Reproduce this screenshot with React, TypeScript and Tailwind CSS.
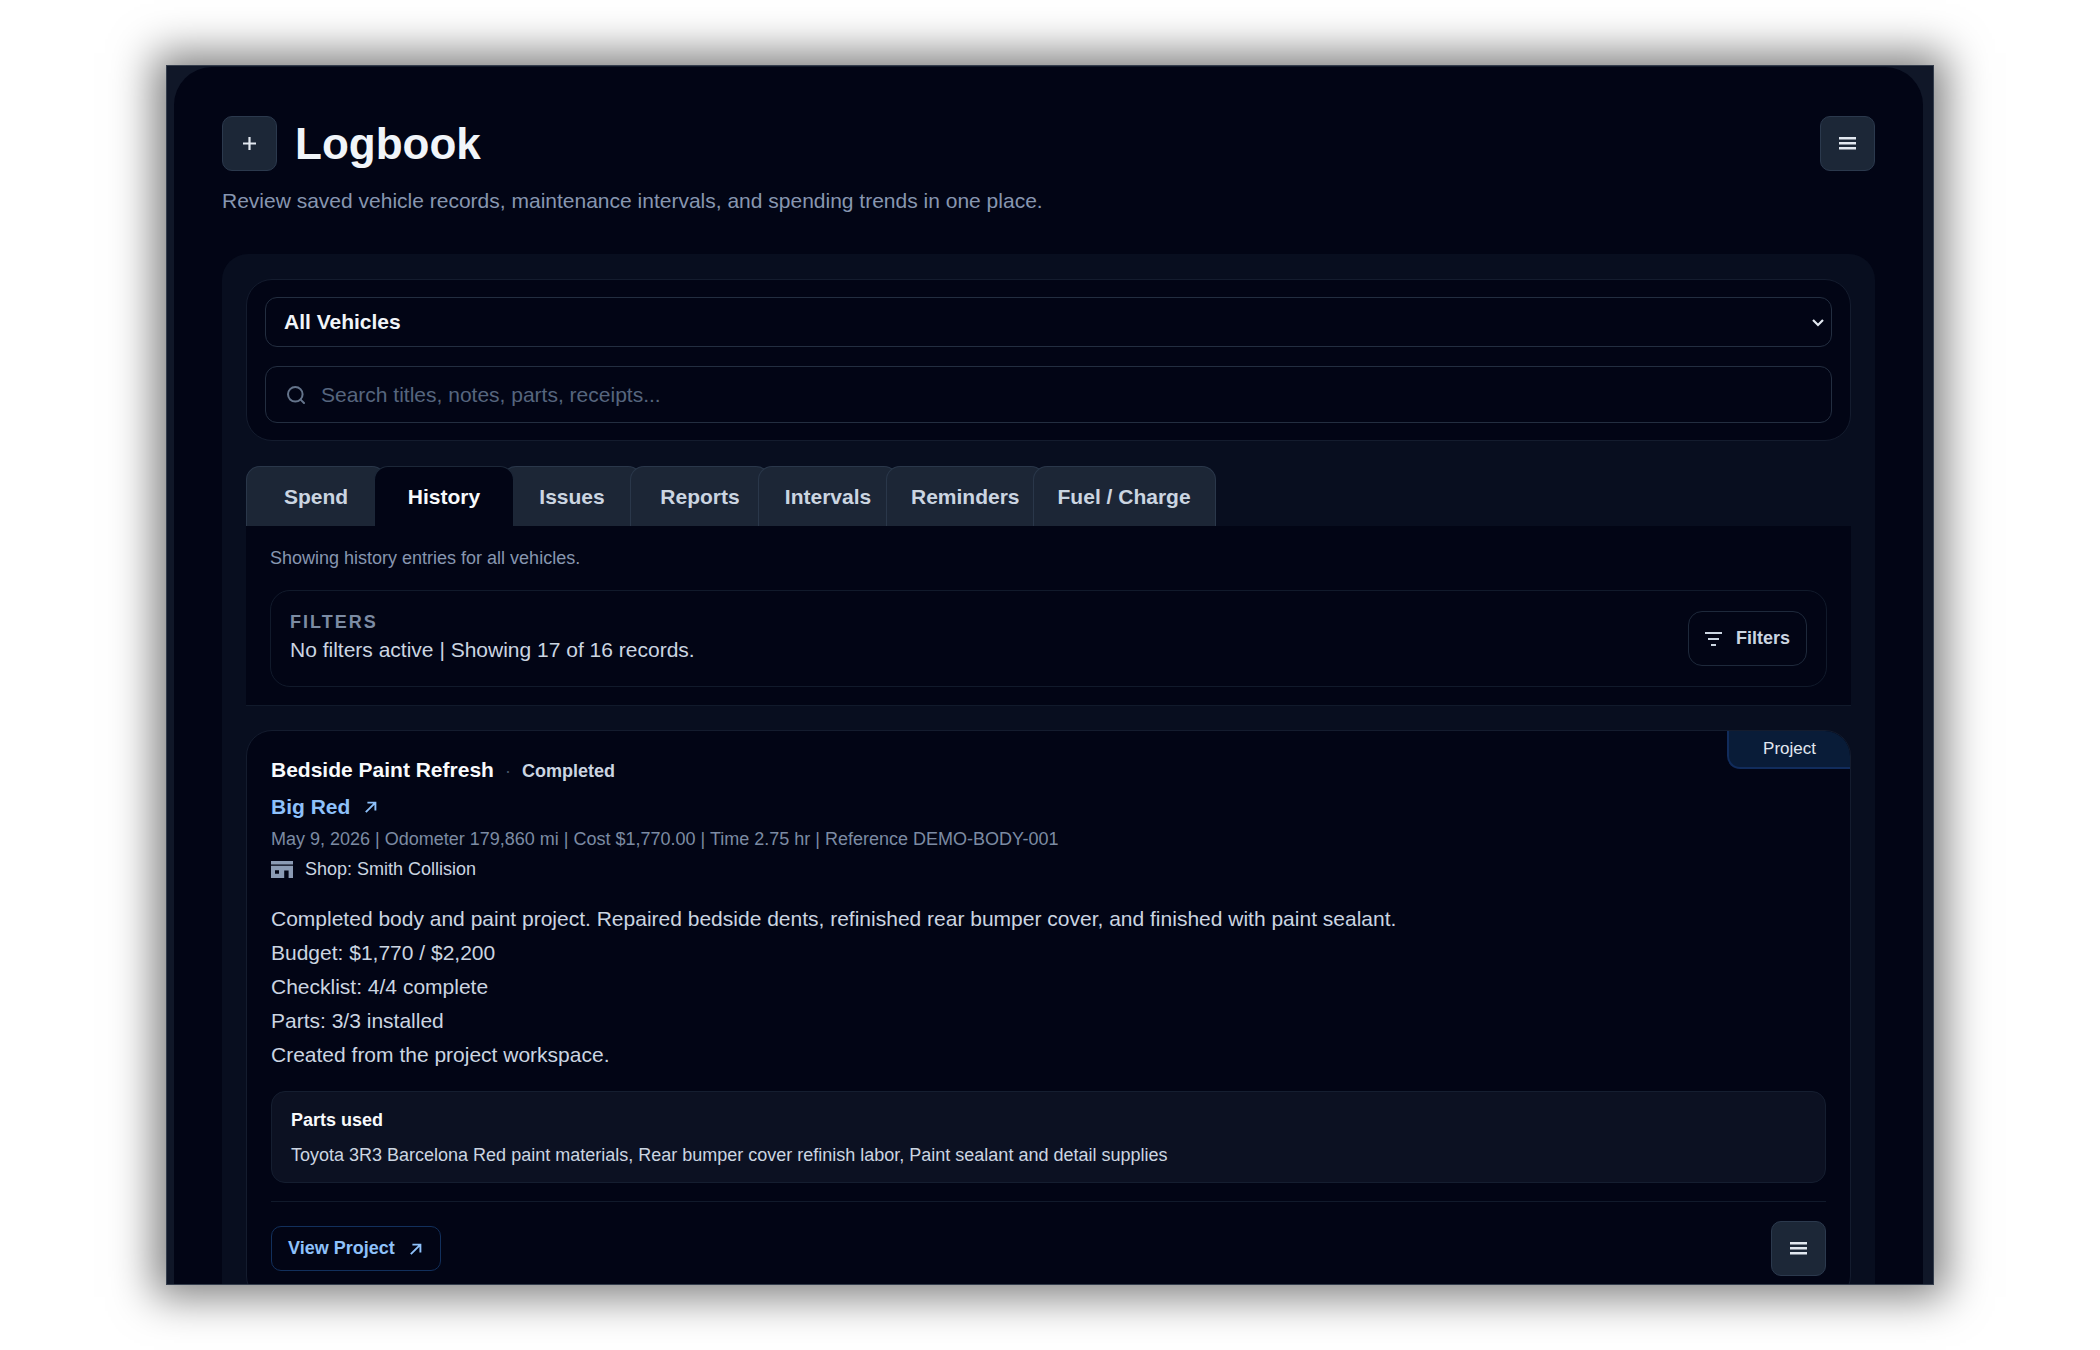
import type { ReactNode } from "react";

const tabs = ["Spend", "History", "Issues", "Reports", "Intervals", "Reminders", "Fuel / Charge"];

const notes = [
  "Completed body and paint project. Repaired bedside dents, refinished rear bumper cover, and finished with paint sealant.",
  "Budget: $1,770 / $2,200",
  "Checklist: 4/4 complete",
  "Parts: 3/3 installed",
  "Created from the project workspace.",
];

const MenuIcon = () => (
  <svg width="17" height="15" viewBox="0 0 17 15" stroke="currentColor" strokeWidth="2.4" aria-hidden="true">
    <path d="M0 2.2h17M0 7.2h17M0 12.2h17" />
  </svg>
);

const PlusIcon = () => (
  <svg width="13" height="13" viewBox="0 0 13 13" stroke="currentColor" strokeWidth="2.2" aria-hidden="true">
    <path d="M0 6.5h13M6.5 0v13" />
  </svg>
);

const FilterIcon = () => (
  <svg width="17" height="16" viewBox="0 0 17 16" stroke="currentColor" strokeWidth="2" aria-hidden="true">
    <path d="M0 2h17M3 8h11M6 14h5" />
  </svg>
);

const ArrowIcon = () => (
  <svg width="12" height="12" viewBox="0 0 12 12" fill="none" stroke="currentColor" strokeWidth="1.9" aria-hidden="true">
    <path d="M.8 11.2 10.4 1.6M2.4 1.6h8v8" />
  </svg>
);

const SearchIcon = () => (
  <svg width="18" height="18" viewBox="0 0 18 18" fill="none" stroke="currentColor" strokeWidth="2" aria-hidden="true">
    <circle cx="8.3" cy="8.3" r="7.3" />
    <path d="m13.6 13.6 3.4 3.4" strokeLinecap="round" />
  </svg>
);

const ShopIcon = () => (
  <svg width="22" height="17" viewBox="0 0 22 17" fill="currentColor" aria-hidden="true">
    <path d="M0 0h22v3.6H0zM0 4.8h22V17h-4.4V9.4h-4.4V17H0zM4 9.2v3.6h4V9.2z" fillRule="evenodd" />
  </svg>
);

const IconButton = ({ label, children }: { label: string; children: ReactNode }) => (
  <button
    type="button"
    aria-label={label}
    className="flex size-[55px] shrink-0 items-center justify-center rounded-[10px] border border-[#2b394d] bg-[#1c2737] text-[#e2e8f0]"
  >
    {children}
  </button>
);

const Header = () => (
  <header>
    <div className="flex items-center justify-between">
      <div className="flex items-center gap-[18px]">
        <IconButton label="Add record">
          <PlusIcon />
        </IconButton>
        <h1 className="text-[44px] leading-[54px] font-bold text-[#f1f5f9]">Logbook</h1>
      </div>
      <IconButton label="Open menu">
        <MenuIcon />
      </IconButton>
    </div>
    <p className="mt-[13px] text-[21px] leading-[34px] text-[#8796b0]">
      Review saved vehicle records, maintenance intervals, and spending trends in one place.
    </p>
  </header>
);

const SearchPanel = () => (
  <section className="flex flex-col gap-[19px] rounded-[26px] border border-[#141c2e] bg-[#020515] px-[18px] py-[17px]">
    <div className="relative">
      <select
        aria-label="Vehicle"
        className="block h-[50px] w-full appearance-none rounded-xl border border-[#232e40] bg-[#020515] px-[18px] text-[21px] font-bold text-[#f1f5f9]"
      >
        <option>All Vehicles</option>
      </select>
      <svg
        className="pointer-events-none absolute top-5 right-2 text-[#e2e8f0]"
        width="12"
        height="12"
        viewBox="0 0 12 12"
        fill="none"
        stroke="currentColor"
        strokeWidth="2.2"
        aria-hidden="true"
      >
        <path d="m1 3 5 5 5-5" />
      </svg>
    </div>
    <label className="flex h-[57px] items-center gap-4 rounded-xl border border-[#232e40] px-[21px] text-[#64748b]">
      <SearchIcon />
      <input
        type="search"
        aria-label="Search records"
        placeholder="Search titles, notes, parts, receipts..."
        className="min-w-0 flex-1 bg-transparent text-[21px] outline-none placeholder:text-[#56657e]"
      />
    </label>
  </section>
);

const Tabs = () => (
  <div role="tablist" className="mt-[25px] flex">
    {tabs.map((tab) => (
      <button
        key={tab}
        type="button"
        role="tab"
        aria-selected={tab === "History"}
        className={
          tab === "History"
            ? "relative z-10 -mr-3 h-[60px] min-w-[140px] rounded-t-[14px] border border-b-0 border-[#1c2738] bg-[#020515] px-6 text-[21px] font-bold text-[#f8fafc]"
            : "-mr-3 h-[60px] min-w-[140px] rounded-t-[14px] border border-b-0 border-[#2a374a] bg-[#1c2636] px-6 text-[21px] font-bold text-[#cbd5e1]"
        }
      >
        {tab}
      </button>
    ))}
  </div>
);

const FilterBar = () => (
  <section className="border-b border-[#111a2b] bg-[#020515] px-6 py-[18px]">
    <p className="text-[18px] leading-[28px] text-[#8796b0]">Showing history entries for all vehicles.</p>
    <div className="mt-[18px] flex items-center justify-between rounded-[20px] border border-[#111a2b] px-[19px] py-5">
      <div>
        <h2 className="text-[18px] leading-[22px] font-bold tracking-[2px] text-[#7c8ba3]">FILTERS</h2>
        <p className="text-[21px] leading-[33px] text-[#cbd5e1]">No filters active | Showing 17 of 16 records.</p>
      </div>
      <button
        type="button"
        className="flex h-[55px] items-center gap-[14px] rounded-[14px] border border-[#1e293b] px-4 text-[18px] font-bold text-[#cbd5e1]"
      >
        <FilterIcon />
        Filters
      </button>
    </div>
  </section>
);

const RecordCard = () => (
  <article className="relative mt-6 rounded-[26px] border border-[#141c2e] bg-[#020515] px-6 pt-[22px] pb-[25px]">
    <span className="absolute top-0 right-0 rounded-tr-[25px] rounded-bl-[13px] border-b-2 border-l-2 border-[#112c5c] bg-[#091c38] px-[34px] py-[5px] text-[17px] leading-[26px] text-[#e2e8f0]">
      Project
    </span>
    <div className="flex items-baseline gap-[11px]">
      <h2 className="text-[21px] leading-[34px] font-bold text-[#f8fafc]">Bedside Paint Refresh</h2>
      <span className="text-[18px] text-[#475569]">·</span>
      <span className="text-[18px] font-bold text-[#cbd5e1]">Completed</span>
    </div>
    <a href="#vehicle" className="mt-[3px] flex items-center gap-[15px] text-[21px] leading-[34px] font-bold text-[#8ec1fb]">
      Big Red
      <ArrowIcon />
    </a>
    <p className="text-[18px] leading-[30px] text-[#7c8ba3]">
      May 9, 2026 | Odometer 179,860 mi | Cost $1,770.00 | Time 2.75 hr | Reference DEMO-BODY-001
    </p>
    <p className="flex items-center gap-3 text-[18px] leading-[30px] text-[#cbd5e1]">
      <span className="text-[#8b9bb4]">
        <ShopIcon />
      </span>
      Shop: Smith Collision
    </p>
    <div className="mt-[18px] text-[21px] leading-[34px] text-[#cbd5e1]">
      {notes.map((note) => (
        <p key={note}>{note}</p>
      ))}
    </div>
    <section className="mt-[19px] rounded-[14px] border border-[#151e30] bg-[#0c1122] px-[19px] py-[10px]">
      <h3 className="text-[18px] leading-[36px] font-bold text-[#f8fafc]">Parts used</h3>
      <p className="text-[18px] leading-[34px] text-[#cbd5e1]">
        Toyota 3R3 Barcelona Red paint materials, Rear bumper cover refinish labor, Paint sealant and detail supplies
      </p>
    </section>
    <footer className="mt-[18px] flex items-center justify-between border-t border-[#111a2b] pt-[19px]">
      <a
        href="#project"
        className="flex h-[45px] items-center gap-[15px] rounded-[10px] border border-[#12305c] pr-[18px] pl-4 text-[18px] font-bold text-[#8ec1fb]"
      >
        View Project
        <ArrowIcon />
      </a>
      <IconButton label="Record actions">
        <MenuIcon />
      </IconButton>
    </footer>
  </article>
);

export default function App() {
  return (
    <div className="h-screen bg-white px-[166px] py-[65px] font-['Liberation_Sans',Arial,sans-serif]">
      <div className="h-full overflow-hidden border border-[#343d4c] bg-[#101728] pt-px pr-[10px] pl-[7px] shadow-[0_0_40px_12px_rgba(0,0,0,0.5)]">
        <main className="rounded-t-[38px] bg-[#020515] px-12 pt-[49px]">
          <Header />
          <div className="mt-9 rounded-t-[26px] bg-[#080e1f] px-6 py-[25px]">
            <SearchPanel />
            <Tabs />
            <FilterBar />
            <RecordCard />
          </div>
        </main>
      </div>
    </div>
  );
}
